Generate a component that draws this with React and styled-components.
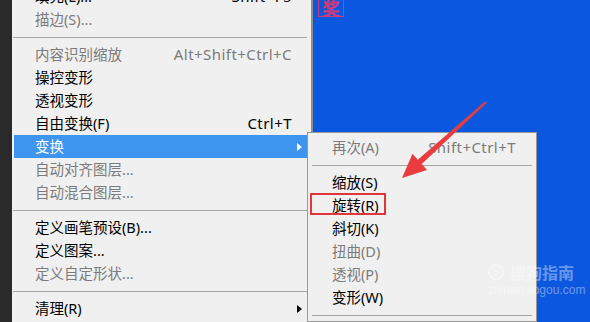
import React from 'react'
import styled, { createGlobalStyle } from 'styled-components'

const GlobalStyle = createGlobalStyle`
  html, body {
    margin: 0;
    padding: 0;
    background: #0c57df;
  }
  body {
    font-family: "Noto Sans", "Noto Sans CJK SC", sans-serif;
  }
`

const mainItems = [
  { label: '填充(L)...', shortcut: 'Shift+F5' },
  { label: '描边(S)...', disabled: true },
  { sep: true },
  { label: '内容识别缩放', shortcut: 'Alt+Shift+Ctrl+C', disabled: true },
  { label: '操控变形' },
  { label: '透视变形' },
  { label: '自由变换(F)', shortcut: 'Ctrl+T' },
  { label: '变换', active: true, sub: true },
  { label: '自动对齐图层...', disabled: true },
  { label: '自动混合图层...', disabled: true },
  { sep: true },
  { label: '定义画笔预设(B)...' },
  { label: '定义图案...' },
  { label: '定义自定形状...', disabled: true },
  { sep: true },
  { label: '清理(R)', sub: true },
]

const subItems = [
  { label: '再次(A)', shortcut: 'Shift+Ctrl+T', disabled: true },
  { sep: true },
  { label: '缩放(S)' },
  { label: '旋转(R)' },
  { label: '斜切(K)' },
  { label: '扭曲(D)', disabled: true },
  { label: '透视(P)', disabled: true },
  { label: '变形(W)' },
  { sep: true },
]

function MenuList({ items, sub }) {
  return items.map((it, i) =>
    it.sep ? (
      <Separator key={i} $sub={sub} />
    ) : (
      <Row key={i} $disabled={it.disabled} $active={it.active} $sub={sub}>
        <Label>{it.label}</Label>
        {it.shortcut && <Shortcut>{it.shortcut}</Shortcut>}
        {it.sub && <SubArrow $active={it.active} />}
      </Row>
    )
  )
}

export default function App() {
  return (
    <>
      <GlobalStyle />
      <Page>
        <Strip />
        <Menu>
          <MenuList items={mainItems} />
        </Menu>
        <Canvas>
          <Stamp>奖</Stamp>
        </Canvas>

        <SubMenu>
          <MenuList items={subItems} sub />
        </SubMenu>

        <Highlight />

        <Annotation viewBox="0 0 590 322" width="590" height="322">
          <polygon
            points="486.7,102.7 421.8,164.1 427,170 402,178 412.5,153.8 417.8,159.7 485.3,101.3"
            fill="#e83c3e"
          />
        </Annotation>

        <Watermark>
          <WmTop>
            <WmLogo>S</WmLogo>
            <span>搜狗指南</span>
          </WmTop>
          <WmUrl>zhinan.sogou.com</WmUrl>
        </Watermark>
      </Page>
    </>
  )
}

const Page = styled.div`
  position: relative;
  width: 590px;
  height: 322px;
  overflow: hidden;
  display: flex;
  background: #0c57df;
`

const Strip = styled.div`
  width: 12px;
  flex: none;
  background: #2a2a2a;
`

const Menu = styled.div`
  width: 299px;
  flex: none;
  background: #f0f0f0;
  border-right: 2px solid #8d8d8d;
  margin-top: -15px;
`

const Canvas = styled.div`
  flex: 1;
  background: #0c57df;
  position: relative;
`

const Stamp = styled.span`
  position: absolute;
  left: 5px;
  top: -3px;
  width: 26px;
  height: 20px;
  box-sizing: border-box;
  border: 1px solid #d23a78;
  color: transparent;
  -webkit-text-stroke: 1px #d23a78;
  font-family: "Noto Sans CJK SC", sans-serif;
  font-size: 17px;
  line-height: 20px;
  text-align: center;
`

const Row = styled.div`
  position: relative;
  display: flex;
  align-items: center;
  height: 23px;
  line-height: 23px;
  margin: 0 ${p => (p.$active ? '3px' : '0')} 0 ${p => (p.$active ? '2px' : '0')};
  padding-left: ${p => (p.$sub ? '24px' : p.$active ? '21px' : '23px')};
  padding-right: ${p => (p.$sub ? '20px' : p.$active ? '16px' : '19px')};
  font-size: 14.5px;
  white-space: nowrap;
  color: ${p => (p.$active ? '#ffffff' : p.$disabled ? '#7b7b7b' : '#000000')};
  background: ${p => (p.$active ? '#3d95ef' : 'transparent')};
`

const Label = styled.span`
  flex: 1;
`

const Shortcut = styled.span`
  flex: none;
  font-size: 15px;
  letter-spacing: 0.45px;
`

const SubArrow = styled.span`
  position: absolute;
  right: ${p => (p.$active ? '6px' : '9px')};
  top: 8px;
  width: 0;
  height: 0;
  border-top: 4px solid transparent;
  border-bottom: 4px solid transparent;
  border-left: 5px solid ${p => (p.$active ? '#ffffff' : '#000000')};
`

const Separator = styled.div`
  height: 1px;
  margin: ${p => (p.$sub ? '6px 4px 5px 4px' : '6px 4px 5px 1px')};
  background: #a5a5a5;
`

const SubMenu = styled.div`
  position: absolute;
  left: 307px;
  top: 132px;
  width: 228px;
  padding-top: 3px;
  background: #f0f0f0;
  border: 1px solid #979797;
`

const Highlight = styled.div`
  position: absolute;
  left: 310px;
  top: 193px;
  width: 76px;
  height: 22px;
  box-sizing: border-box;
  border: 2px solid #e0353b;
`

const Annotation = styled.svg`
  position: absolute;
  left: 0;
  top: 0;
  pointer-events: none;
`

const Watermark = styled.div`
  position: absolute;
  left: 488px;
  top: 262px;
  color: rgba(255, 255, 255, 0.4);
  display: flex;
  flex-direction: column;
  gap: 1px;
`

const WmTop = styled.div`
  display: flex;
  align-items: center;
  gap: 6px;
  font-family: "Noto Sans CJK SC", sans-serif;
  font-size: 16px;
  font-weight: 700;
  line-height: 20px;
`

const WmLogo = styled.span`
  width: 16px;
  height: 16px;
  border-radius: 50%;
  border: 2px solid rgba(255, 255, 255, 0.4);
  box-sizing: border-box;
  font-size: 12px;
  line-height: 12px;
  text-align: center;
  font-family: "Liberation Sans", sans-serif;
`

const WmUrl = styled.div`
  font-family: "Liberation Sans", sans-serif;
  font-size: 12px;
  line-height: 14px;
`
